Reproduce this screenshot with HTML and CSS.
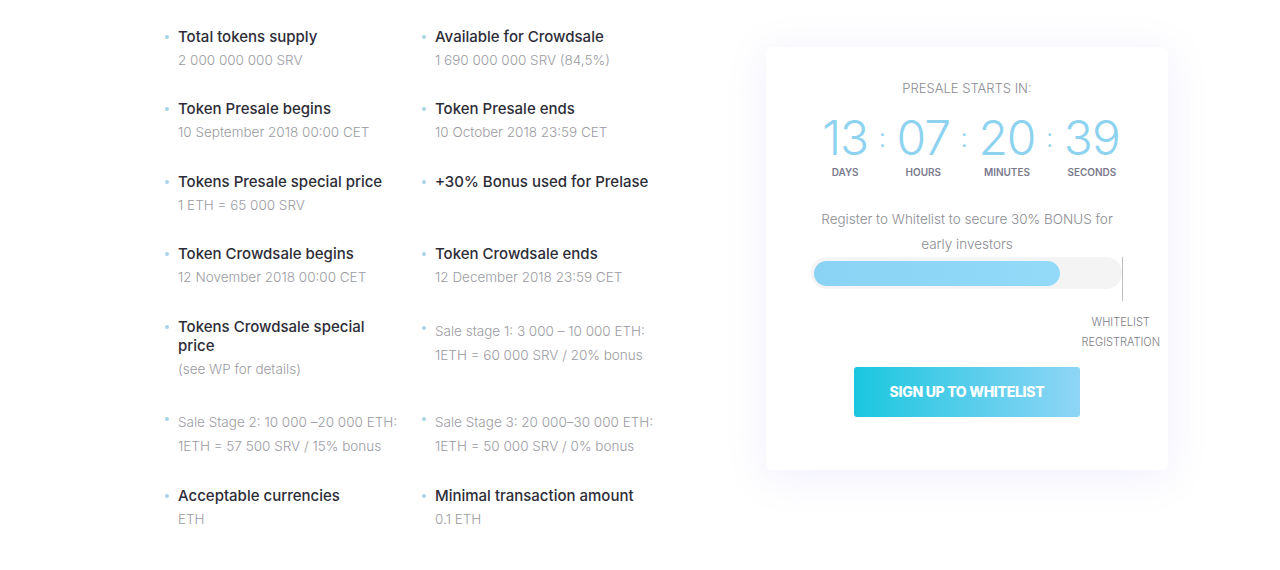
FILE: index.html
```html
<!DOCTYPE html>
<html>
<head>
<meta charset="utf-8">
<link rel="stylesheet" href="styles.css">
</head>
<body>
<div class="page">
  <div class="facts">
    <div class="item"><div class="t">Total tokens supply</div><div class="s">2 000 000 000 SRV</div></div>
    <div class="item"><div class="t">Available for Crowdsale</div><div class="s">1 690 000 000 SRV (84,5%)</div></div>
    <div class="item"><div class="t">Token Presale begins</div><div class="s">10 September 2018 00:00 CET</div></div>
    <div class="item"><div class="t">Token Presale ends</div><div class="s">10 October 2018 23:59 CET</div></div>
    <div class="item"><div class="t">Tokens Presale special price</div><div class="s">1 ETH = 65 000 SRV</div></div>
    <div class="item"><div class="t">+30% Bonus used for Prelase</div></div>
    <div class="item"><div class="t">Token Crowdsale begins</div><div class="s">12 November 2018 00:00 CET</div></div>
    <div class="item"><div class="t">Token Crowdsale ends</div><div class="s">12 December 2018 23:59 CET</div></div>
    <div class="item"><div class="t">Tokens Crowdsale special<br>price</div><div class="s">(see WP for details)</div></div>
    <div class="item gray"><div class="s">Sale stage 1: 3 000 – 10 000 ETH:<br>1ETH = 60 000 SRV / 20% bonus</div></div>
    <div class="item gray"><div class="s">Sale Stage 2: 10 000 –20 000 ETH:<br>1ETH = 57 500 SRV / 15% bonus</div></div>
    <div class="item gray"><div class="s">Sale Stage 3: 20 000–30 000 ETH:<br>1ETH = 50 000 SRV / 0% bonus</div></div>
    <div class="item"><div class="t">Acceptable currencies</div><div class="s">ETH</div></div>
    <div class="item"><div class="t">Minimal transaction amount</div><div class="s">0.1 ETH</div></div>
  </div>
  <div class="card">
    <div class="starts">PRESALE STARTS IN:</div>
    <div class="timer">
      <div class="unit"><div class="num">13</div><div class="lab">DAYS</div></div>
      <div class="colon">:</div>
      <div class="unit"><div class="num">07</div><div class="lab">HOURS</div></div>
      <div class="colon">:</div>
      <div class="unit"><div class="num">20</div><div class="lab">MINUTES</div></div>
      <div class="colon">:</div>
      <div class="unit"><div class="num">39</div><div class="lab">SECONDS</div></div>
    </div>
    <div class="reg">Register to Whitelist to secure 30% BONUS for<br>early investors</div>
    <div class="track"><div class="fill" style="width:246px"></div><div class="marker"></div></div>
    <div class="marklab"><div>WHITELIST<br>REGISTRATION</div></div>
    <div class="btnrow"><a class="btn">SIGN UP TO WHITELIST</a></div>
  </div>
</div>
</body>
</html>
```
FILE: styles.css
```css
html, body { margin: 0; padding: 0; background: #fff; }
body { font-family: Inter, "Noto Sans", sans-serif; width: 1280px; height: 570px; overflow: hidden; }
.page { display: flex; align-items: flex-start; padding-left: 165px; }
.facts { display: grid; grid-template-columns: 257px 257px; row-gap: 27.5px; padding-top: 26.5px; }
.item { position: relative; padding-left: 13px; }
.item::before { content: ""; position: absolute; left: 0; top: 8px; width: 4px; height: 4px; border-radius: 50%; background: #a9d3e8; }
.item.gray::before { top: 9px; }
.t { font-size: 15px; line-height: 19px; font-weight: 500; color: #2d2d38; }
.s { font-size: 13.5px; line-height: 24px; color: #9b9ba3; font-weight: 300; margin-top: 2px; }
.card { margin-left: 87px; margin-top: 47px; width: 402px; height: 423px; box-sizing: border-box; background: #fff; border-radius: 6px; box-shadow: 0 6px 40px rgba(130, 120, 230, 0.13); padding-top: 32px; display: flex; flex-direction: column; align-items: center; }
.starts { font-size: 13px; line-height: 18px; color: #8b8b94; font-weight: 300; }
.timer { display: flex; align-items: flex-start; margin-top: 13px; margin-left: 8px; }
.unit { display: flex; flex-direction: column; align-items: center; }
.num { font-size: 48px; line-height: 56px; font-weight: 300; color: #8dd3f0; letter-spacing: -1px; }
.lab { font-size: 10px; line-height: 14px; font-weight: 600; color: #7a7a8e; margin-top: -1px; }
.colon { font-size: 26px; line-height: 56px; color: #92d5f1; font-weight: 300; padding: 0 10.5px; }
.reg { margin-top: 27.5px; font-size: 13.5px; line-height: 25px; color: #8c8c94; font-weight: 300; text-align: center; }
.track { position: relative; width: 311px; height: 32px; margin-top: 0; border-radius: 16px; background: #f4f4f5; box-sizing: border-box; padding: 4px 3px 3px; align-self: flex-start; margin-left: 45px; }
.fill { height: 25px; border-radius: 13px; background: linear-gradient(90deg, #8ad3f4, #92daf8); }
.marker { position: absolute; left: 311px; top: 0; width: 1px; height: 44px; background: #bdbdc2; }
.marklab { align-self: stretch; display: flex; justify-content: flex-end; padding-right: 8px; margin-top: 23px; }
.marklab div { font-size: 11px; line-height: 20px; color: #7d7d85; text-align: center; font-weight: 300; }
.btnrow { margin-top: 15px; }
.btn { display: flex; align-items: center; justify-content: center; width: 226px; height: 50px; border-radius: 3px; background: linear-gradient(90deg, #1bc6df, #8fd5f6); color: #fff; font-weight: 800; font-size: 14px; letter-spacing: -0.3px; }
```
